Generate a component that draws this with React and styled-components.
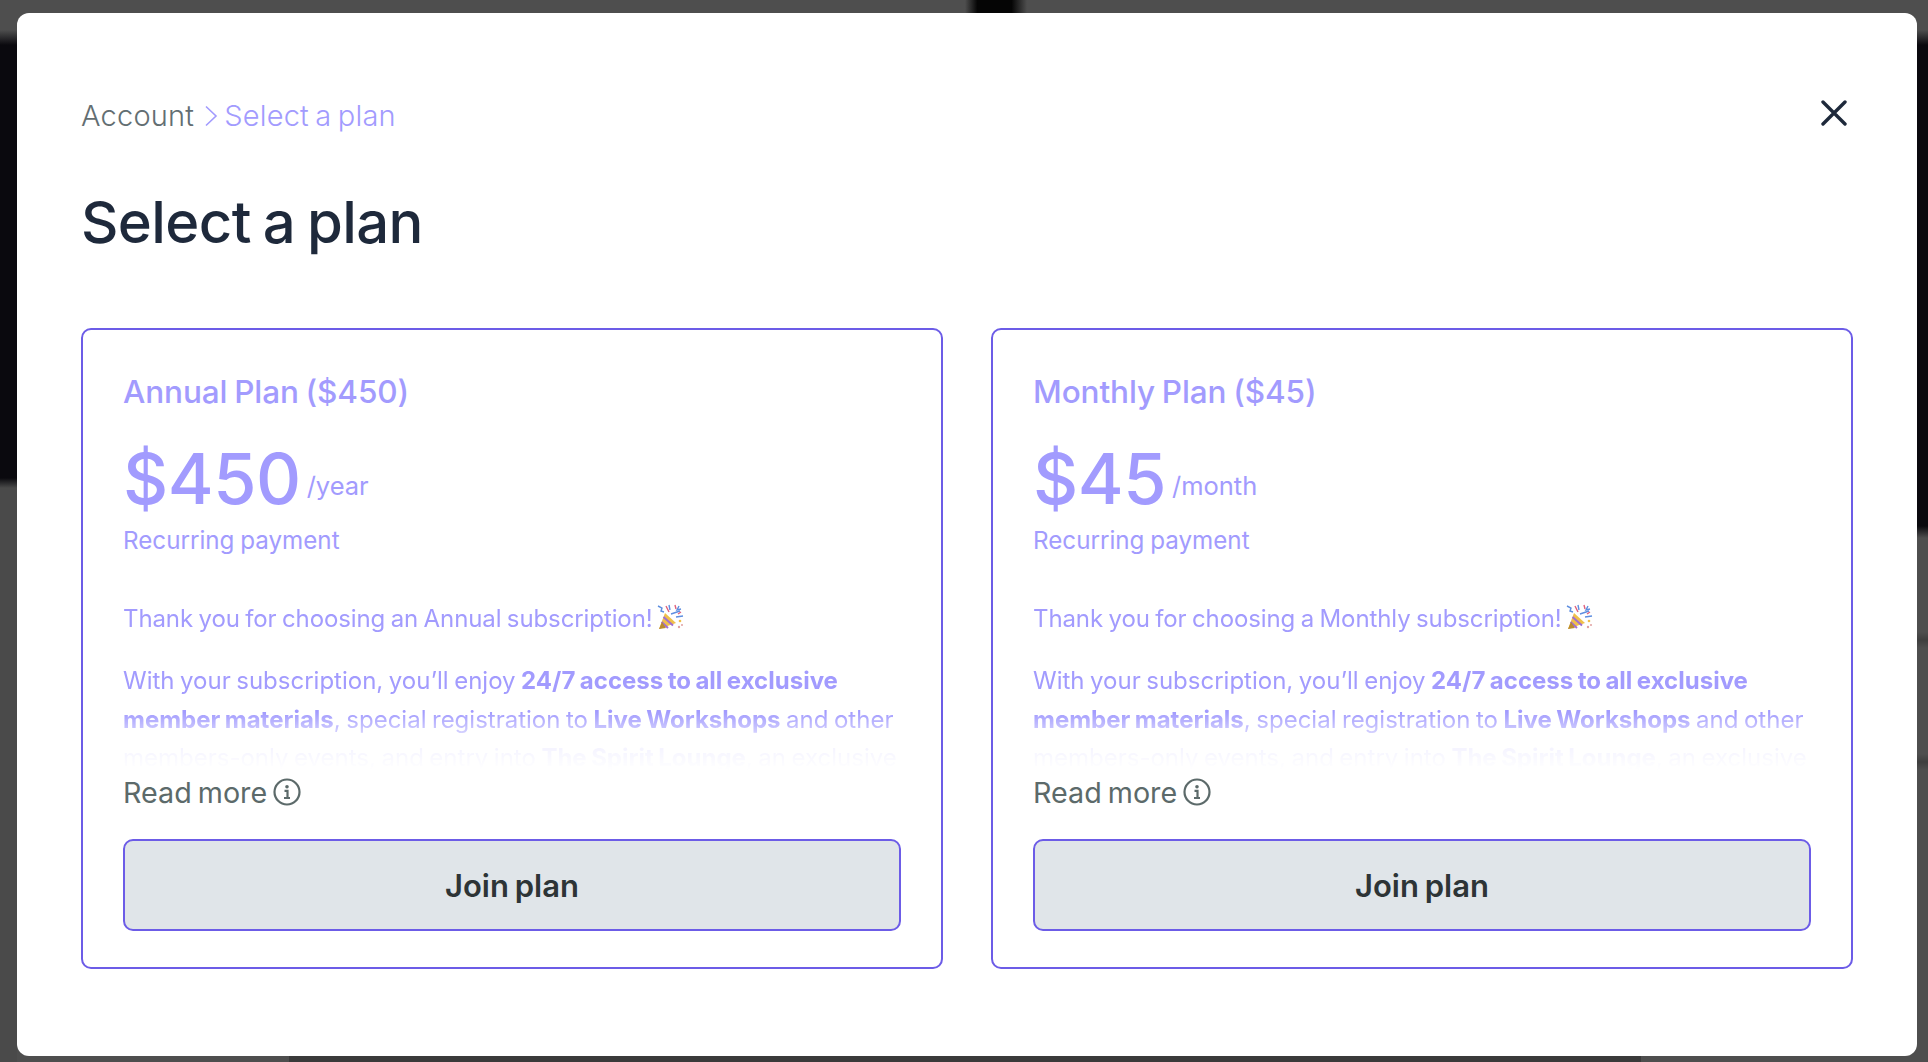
import React from "react";
import styled, { createGlobalStyle } from "styled-components";

const GlobalStyle = createGlobalStyle`
  html, body {
    margin: 0;
    padding: 0;
    height: 100%;
  }
  body {
    font-family: "Inter", "Liberation Sans", sans-serif;
  }
  * {
    box-sizing: border-box;
  }
`;

const accent = "#a29bfe";
const border = "#6c5ce7";

// dimmed page behind the modal
const Backdrop = styled.div`
  width: 1928px;
  height: 1062px;
  overflow: hidden;
  padding: 13px 11px 6px 17px;
  background-color: #4e4e4e;
  background-repeat: no-repeat;
  background-image:
    linear-gradient(90deg, #4e4e4e, #050505 20%, #050505 75%, #4e4e4e),
    linear-gradient(180deg, #4e4e4e 30px, #0a090e 45px, #0a090e 478px, #4a4a4a 488px),
    linear-gradient(180deg, #4e4e4e 30px, #0a090e 45px, #0a090e 526px, #4e4e4e 538px, #4e4e4e 632px, #3e3e3e 640px, #4e4e4e 648px, #4e4e4e 754px, #3e3e3e 762px, #4e4e4e 770px),
    linear-gradient(90deg, #3a3a3a, #3a3a3a);
  background-size: 62px 13px, 17px 1062px, 11px 1062px, 1352px 6px;
  background-position: 965px 0, 0 0, 1917px 0, 289px 1056px;
`;

const Modal = styled.div`
  width: 1900px;
  height: 1043px;
  background: #fff;
  border-radius: 12px;
  padding: 84px 64px 0;
`;

const TopRow = styled.div`
  display: flex;
  align-items: flex-start;
  justify-content: space-between;
`;

const Breadcrumb = styled.nav`
  display: flex;
  align-items: center;
  height: 36px;
  font-size: 29px;
  font-weight: 300;
  letter-spacing: 0.2px;
  word-spacing: -2px;
  color: #636e72;
`;

const Crumb = styled.span`
  color: ${(p) => (p.$active ? accent : "#636e72")};
`;

const CrumbArrow = styled.svg`
  width: 14px;
  height: 22px;
  margin: 2px 6px 0 10px;
`;

const CloseButton = styled.button`
  display: flex;
  border: 0;
  padding: 0;
  margin: 3px 6px 0 0;
  background: none;
`;

const Title = styled.h1`
  margin: 53px 0 0;
  font-size: 58px;
  line-height: 72px;
  font-weight: 550;
  letter-spacing: -0.6px;
  word-spacing: -3px;
  color: #1e293b;
`;

const Plans = styled.div`
  display: grid;
  grid-template-columns: 1fr 1fr;
  gap: 48px;
  margin-top: 70px;
`;

const Card = styled.section`
  height: 641px;
  border: 2px solid ${border};
  border-radius: 10px;
  padding: 42px 40px 0;
`;

const PlanName = styled.h2`
  margin: 0;
  font-size: 31.5px;
  line-height: 40px;
  font-weight: 550;
  letter-spacing: -0.1px;
  word-spacing: -1.5px;
  color: ${accent};
`;

const PriceRow = styled.div`
  display: flex;
  align-items: center;
  margin-top: 27px;
  height: 80px;
`;

const Price = styled.span`
  font-size: 70px;
  line-height: 80px;
  font-weight: 500;
  letter-spacing: -0.5px;
  color: ${accent};
`;

const Period = styled.span`
  margin: 12px 0 0 6px;
  font-size: 25.5px;
  font-weight: 400;
  color: ${accent};
`;

const Recurring = styled.div`
  margin-top: 6px;
  font-size: 24.2px;
  line-height: 32px;
  font-weight: 400;
  word-spacing: -1px;
  color: ${accent};
`;

const Description = styled.div`
  height: 170px;
  margin-top: 43px;
  overflow: hidden;
  font-size: 24px;
  line-height: 38.4px;
  font-weight: 400;
  word-spacing: -1.2px;
  color: ${accent};
  mask-image: linear-gradient(180deg, #000 66%, rgba(0, 0, 0, 0.12) 86%, transparent 100%);
`;

const Paragraph = styled.p`
  margin: 0 0 24px;
  white-space: nowrap;
  letter-spacing: ${(p) => (p.$tight ? "-0.1px" : "0")};

  b {
    font-weight: 700;
  }
`;

const Popper = styled.svg`
  width: 28px;
  height: 28px;
  margin-left: 3px;
  vertical-align: -5px;
`;

const ReadMore = styled.button`
  display: flex;
  align-items: center;
  gap: 6px;
  height: 36px;
  margin-top: 4px;
  padding: 0;
  border: 0;
  background: none;
  font-family: inherit;
  font-size: 28.7px;
  font-weight: 400;
  word-spacing: -2px;
  color: #5c6a6a;
`;

const JoinButton = styled.button`
  display: block;
  width: 100%;
  height: 92px;
  margin-top: 29px;
  border: 2px solid ${border};
  border-radius: 10px;
  background: #e0e5e9;
  font-family: inherit;
  font-size: 31px;
  font-weight: 600;
  word-spacing: -2px;
  color: #2d3436;
`;

function InfoIcon() {
  return (
    <svg width="28" height="28" viewBox="0 0 28 28" fill="none">
      <circle cx="14" cy="14" r="12.5" stroke="#5c6a6a" strokeWidth="2.2" />
      <circle cx="14" cy="8.8" r="1.8" fill="#5c6a6a" />
      <path d="M11.5 12.8h3v7M11 20h6" stroke="#5c6a6a" strokeWidth="2.2" />
    </svg>
  );
}

function PartyPopper() {
  return (
    <Popper viewBox="0 0 28 28">
      <path d="M3 25 9 9l11 10z" fill="#f0c04a" />
      <path d="M5.6 18 12 24M7.5 13 17 21.5" stroke="#a06fd0" strokeWidth="2" />
      <path d="M3 25l3-7 4 6z" fill="#b98a2e" />
      <path d="M2 2l4 2-1 3 3 1M13 1l1 5M23 2l-2 4 4-1M15 10l9-3M20 13l7-1" stroke="#5f8fe0" strokeWidth="1.4" fill="none" />
      <path d="M10 2l3 6M19 1l1 4M25 8l-3 2" stroke="#e0607c" strokeWidth="1.4" fill="none" />
      <circle cx="24" cy="17" r="1.3" fill="#f0c04a" />
      <circle cx="23" cy="23" r="1.2" fill="#e0a0a0" />
      <circle cx="26" cy="21" r="1" fill="#e0a0a0" />
    </Popper>
  );
}

function PlanCard({ name, price, period, thanks }) {
  return (
    <Card>
      <PlanName>{name}</PlanName>
      <PriceRow>
        <Price>{price}</Price>
        <Period>{period}</Period>
      </PriceRow>
      <Recurring>Recurring payment</Recurring>
      <Description>
        <Paragraph $tight>
          {thanks}
          <PartyPopper />
        </Paragraph>
        <Paragraph>
          With your subscription, you’ll enjoy <b>24/7 access to all exclusive</b>
          <br />
          <b>member materials</b>, special registration to <b>Live Workshops</b> and other
          <br />
          members-only events, and entry into <b>The Spirit Lounge</b>, an exclusive
        </Paragraph>
      </Description>
      <ReadMore>
        Read more
        <InfoIcon />
      </ReadMore>
      <JoinButton>Join plan</JoinButton>
    </Card>
  );
}

function App() {
  return (
    <>
      <GlobalStyle />
      <Backdrop>
        <Modal>
          <TopRow>
            <Breadcrumb>
              <Crumb>Account</Crumb>
              <CrumbArrow viewBox="0 0 14 22" fill="none">
                <path d="M2 1.5 12 11 2 20.5" stroke={accent} strokeWidth="1.6" />
              </CrumbArrow>
              <Crumb $active>Select a plan</Crumb>
            </Breadcrumb>
            <CloseButton>
              <svg width="26" height="26" viewBox="0 0 26 26" fill="none">
                <path d="M2 2l22 22M24 2 2 24" stroke="#1e293b" strokeWidth="3.4" strokeLinecap="round" />
              </svg>
            </CloseButton>
          </TopRow>
          <Title>Select a plan</Title>
          <Plans>
            <PlanCard
              name="Annual Plan ($450)"
              price="$450"
              period="/year"
              thanks="Thank you for choosing an Annual subscription!"
            />
            <PlanCard
              name="Monthly Plan ($45)"
              price="$45"
              period="/month"
              thanks="Thank you for choosing a Monthly subscription!"
            />
          </Plans>
        </Modal>
      </Backdrop>
    </>
  );
}

export default App;
